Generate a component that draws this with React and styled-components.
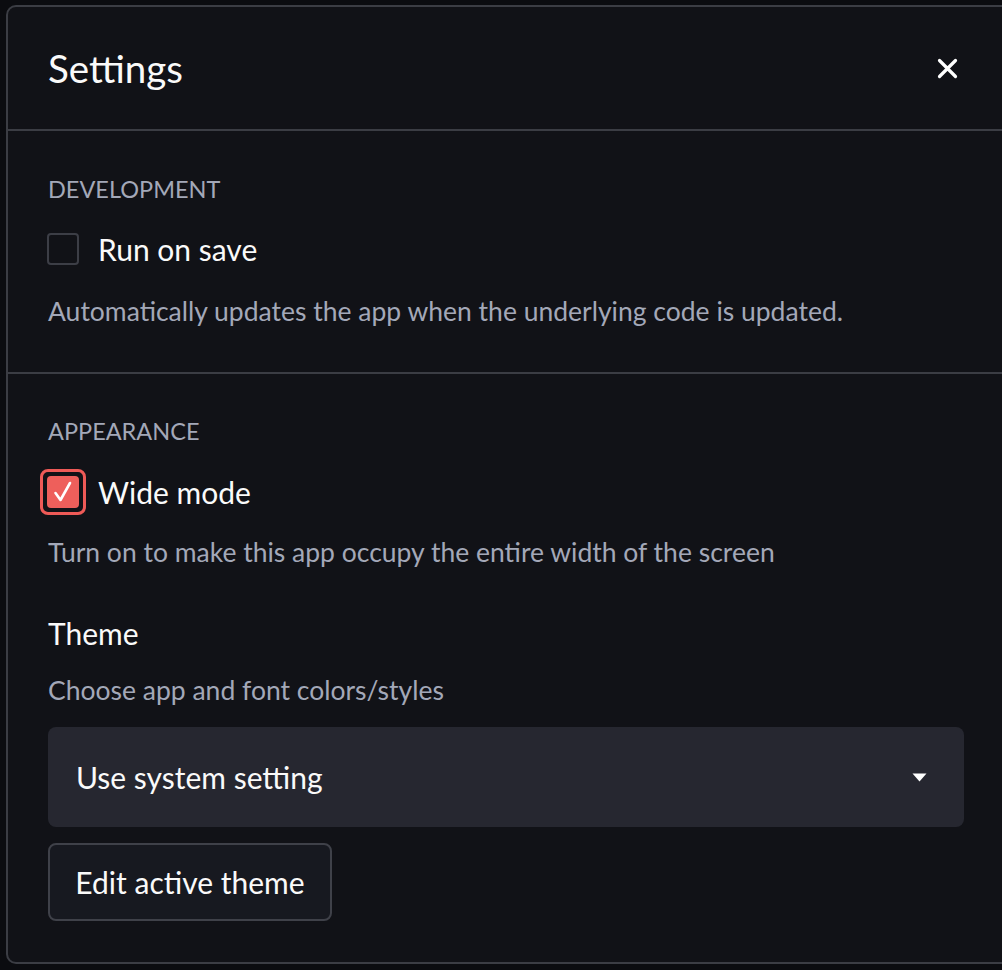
import React from 'react';
import styled, { createGlobalStyle } from 'styled-components';

const GlobalStyle = createGlobalStyle`
  html, body {
    margin: 0;
    padding: 0;
    background: #0b0c10;
    font-family: Lato, "Liberation Sans", sans-serif;
  }
`;

const Page = styled.div`
  width: 1002px;
  height: 970px;
  overflow: hidden;
  padding: 5px 0 0 6px;
  box-sizing: border-box;
`;

const Modal = styled.div`
  width: 1020px;
  height: 959px;
  box-sizing: border-box;
  background: #111217;
  border: 2px solid #3b3d44;
  border-radius: 10px;
  color: #fafafa;
`;

const Header = styled.div`
  height: 124px;
  width: 994px;
  box-sizing: border-box;
  display: flex;
  align-items: center;
  justify-content: space-between;
  padding-left: 40px;
  border-bottom: 2px solid #3b3d44;
`;

const Title = styled.h1`
  margin: 0;
  font-size: 38.5px;
  font-weight: 400;
  line-height: 44px;
`;

const Close = styled.button`
  background: none;
  border: 0;
  padding: 0;
  margin-right: 37px;
  width: 36px;
  height: 36px;
  display: flex;
  align-items: center;
  justify-content: center;
  cursor: pointer;
`;

const Section = styled.section`
  width: 994px;
  box-sizing: border-box;
  padding: ${p => p.$pad};
  border-bottom: ${p => (p.$divider ? '2px solid #3b3d44' : 'none')};
  display: flex;
  flex-direction: column;
`;

const Heading = styled.div`
  font-size: 23.5px;
  color: #a3a8b8;
  line-height: 30px;
`;

const CheckRow = styled.label`
  display: flex;
  align-items: center;
  gap: 20px;
  margin-top: ${p => p.$mt}px;
  height: 46px;
  font-size: 30px;
  line-height: 36px;
  color: #fafafa;
`;

const BoxWrap = styled.span`
  width: 46px;
  height: 46px;
  margin: 0 -8px;
  display: flex;
  align-items: center;
  justify-content: center;
  border-radius: 8px;
  box-sizing: border-box;
  border: 3px solid ${p => (p.$focus ? '#ee5a57' : 'transparent')};
`;

const Box = styled.span`
  width: 32px;
  height: 32px;
  box-sizing: border-box;
  border-radius: 4px;
  border: ${p => (p.$checked ? '0' : '2px solid #3c3e46')};
  background: ${p => (p.$checked ? '#ee5f5b' : 'transparent')};
  display: flex;
  align-items: center;
  justify-content: center;
`;

const Desc = styled.p`
  margin: ${p => p.$mt}px 0 0;
  font-size: 26.5px;
  color: #a3a8b8;
  line-height: 34px;
`;

const Label = styled.div`
  font-size: 30px;
  color: #fafafa;
  margin-top: ${p => p.$mt}px;
  line-height: 36px;
`;

const Select = styled.div`
  margin-top: 20px;
  width: 916px;
  height: 100px;
  box-sizing: border-box;
  background: #262730;
  border-radius: 8px;
  display: flex;
  align-items: center;
  justify-content: space-between;
  padding: 0 37px 0 28px;
  font-size: 30px;
  color: #fafafa;
`;

const Button = styled.button`
  margin-top: 16px;
  align-self: flex-start;
  height: 78px;
  width: 284px;
  padding: 0;
  box-sizing: border-box;
  background: #171920;
  border: 2px solid #3f4149;
  border-radius: 8px;
  color: #fafafa;
  font-family: inherit;
  font-size: 30px;
`;

const Check = () => (
  <svg width="22" height="22" viewBox="0 0 22 22" fill="none">
    <path d="M3.5 12 L8.5 19 L18 2" stroke="#fff" strokeWidth="2.6" strokeLinecap="round" strokeLinejoin="round" />
  </svg>
);

export default function App() {
  return (
    <>
      <GlobalStyle />
      <Page>
        <Modal>
          <Header>
            <Title>Settings</Title>
            <Close aria-label="Close">
              <svg width="21" height="21" viewBox="0 0 21 21">
                <path d="M2.5 2.5 L18.5 18.5 M18.5 2.5 L2.5 18.5" stroke="#fff" strokeWidth="3.2" strokeLinecap="round" />
              </svg>
            </Close>
          </Header>
          <Section $pad="43px 40px 44px" $divider>
            <Heading>DEVELOPMENT</Heading>
            <CheckRow $mt={22}>
              <BoxWrap><Box /></BoxWrap>
              Run on save
            </CheckRow>
            <Desc $mt={22}>Automatically updates the app when the underlying code is updated.</Desc>
          </Section>
          <Section $pad="42px 40px 0">
            <Heading>APPEARANCE</Heading>
            <CheckRow $mt={23}>
              <BoxWrap $focus><Box $checked><Check /></Box></BoxWrap>
              Wide mode
            </CheckRow>
            <Desc $mt={20}>Turn on to make this app occupy the entire width of the screen</Desc>
            <Label $mt={46}>Theme</Label>
            <Desc $mt={22}>Choose app and font colors/styles</Desc>
            <Select>
              Use system setting
              <svg width="15" height="9" viewBox="0 0 15 9">
                <path d="M0.5 0.5 L14.5 0.5 L7.5 8.5 Z" fill="#fff" />
              </svg>
            </Select>
            <Button>Edit active theme</Button>
          </Section>
        </Modal>
      </Page>
    </>
  );
}
